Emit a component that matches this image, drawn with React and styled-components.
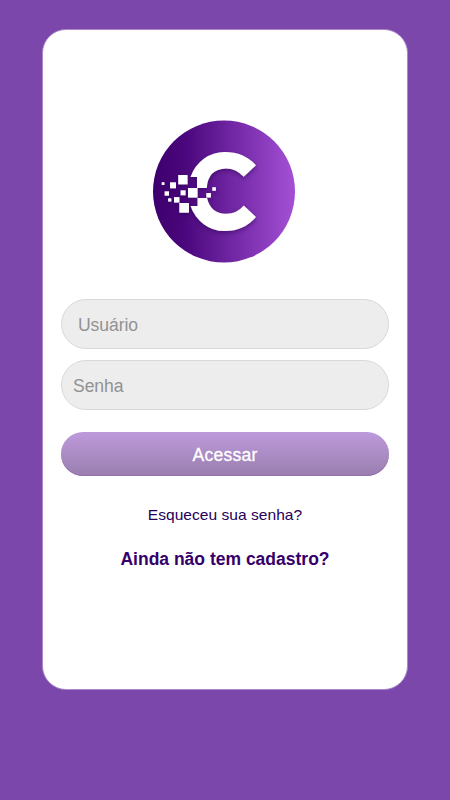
import React from 'react';
import styled, { createGlobalStyle } from 'styled-components';

const GlobalStyle = createGlobalStyle`
  * { box-sizing: border-box; }
  body { margin: 0; background: #7b47ab; font-family: "Liberation Sans", Arial, sans-serif; }
`;

const Page = styled.main`
  min-height: 800px;
  padding: 29px 42px 0;
  background: #7b47ab;
`;

const Card = styled.section`
  display: flex;
  flex-direction: column;
  align-items: center;
  width: 366px;
  height: 661px;
  padding: 90px 18px 0;
  border: 1px solid #a989c8;
  border-radius: 24px;
  background: #fff;
`;

const Logo = styled.svg`
  display: block;
  flex: none;
  width: 144px;
  height: 144px;
  margin-left: -2px;
`;

const Form = styled.form`
  display: flex;
  flex-direction: column;
  width: 328px;
  margin-top: 35px;
`;

const Field = styled.input`
  width: 100%;
  height: 50px;
  margin-bottom: 11px;
  padding: 2px 16px 0 ${({ $inset }) => $inset}px;
  border: 1px solid #d9d9d9;
  border-radius: 25px;
  background: #ededed;
  font: 17.6px "Liberation Sans", Arial, sans-serif;
  letter-spacing: -0.1px;
  color: #444;
  outline: none;
  &::placeholder { color: #929292; opacity: 1; }
`;

const SubmitButton = styled.button`
  height: 44px;
  margin-top: 11px;
  padding: 2px 0 0;
  border: 0;
  border-radius: 22px;
  background: linear-gradient(#be9adb, #997eae);
  box-shadow: inset 0 -1px 0 #9370ad;
  color: #fff;
  font: 17.5px "Liberation Sans", Arial, sans-serif;
  letter-spacing: 0.25px;
  -webkit-text-stroke: 0.3px #fff;
`;

const ForgotLink = styled.a`
  margin-top: 29px;
  font-size: 15.55px;
  letter-spacing: 0.03px;
  line-height: 20px;
  color: #25005b;
  white-space: nowrap;
`;

const SignupLink = styled.a`
  margin-top: 23px;
  font-size: 17.5px;
  font-weight: 700;
  line-height: 22px;
  color: #35006a;
  white-space: nowrap;
`;

const pixels = [
  [161.7, 182.2, 2.8], [170, 182.3, 6], [178.2, 175, 9.4],
  [164.6, 191.3, 4.4], [180.6, 190.3, 5], [188, 188, 9.6],
  [168.1, 198.3, 3.3], [174, 197.1, 5.5], [179.3, 203, 9.7],
  [206.3, 193, 4.6], [212.3, 187.2, 3.6],
];

function CoinLogo() {
  return (
    <Logo viewBox="152 120 144 144" role="img" aria-label="C">
      <defs>
        <linearGradient id="coin">
          <stop offset="0" stopColor="#3d006d" />
          <stop offset="0.22" stopColor="#4a067c" />
          <stop offset="1" stopColor="#a450d6" />
        </linearGradient>
        <filter id="shade" filterUnits="userSpaceOnUse" x="152" y="120" width="144" height="144">
          <feDropShadow dx="0" dy="2" stdDeviation="2" floodColor="#28004b" floodOpacity="0.5" />
        </filter>
      </defs>
      <circle cx="224" cy="191.5" r="71" fill="url(#coin)" />
      <g fill="#fff" filter="url(#shade)">
        <path d="M190.5 177 A36 39 0 0 1 225 152 Q244 152 256 165.2 L243.7 176.8 Q236 168.5 226 168.5 Q208 169 206.8 188 H197 V177 Z" />
        <path d="M197.5 198 H207 Q211 213.8 226 213.8 Q237 213.8 243.7 205.5 L256 217 Q244 231 225 231 A36 39 0 0 1 190.5 206 H197.5 Z" />
        {pixels.map(([x, y, size]) => (
          <rect key={`${x}-${y}`} x={x} y={y} width={size} height={size} />
        ))}
      </g>
    </Logo>
  );
}

export default function App() {
  return (
    <>
      <GlobalStyle />
      <Page>
        <Card>
          <CoinLogo />
          <Form>
            <Field $inset={16} placeholder="Usuário" aria-label="Usuário" />
            <Field $inset={11} type="password" placeholder="Senha" aria-label="Senha" />
            <SubmitButton type="button">Acessar</SubmitButton>
          </Form>
          <ForgotLink>Esqueceu sua senha?</ForgotLink>
          <SignupLink>Ainda não tem cadastro?</SignupLink>
        </Card>
      </Page>
    </>
  );
}
